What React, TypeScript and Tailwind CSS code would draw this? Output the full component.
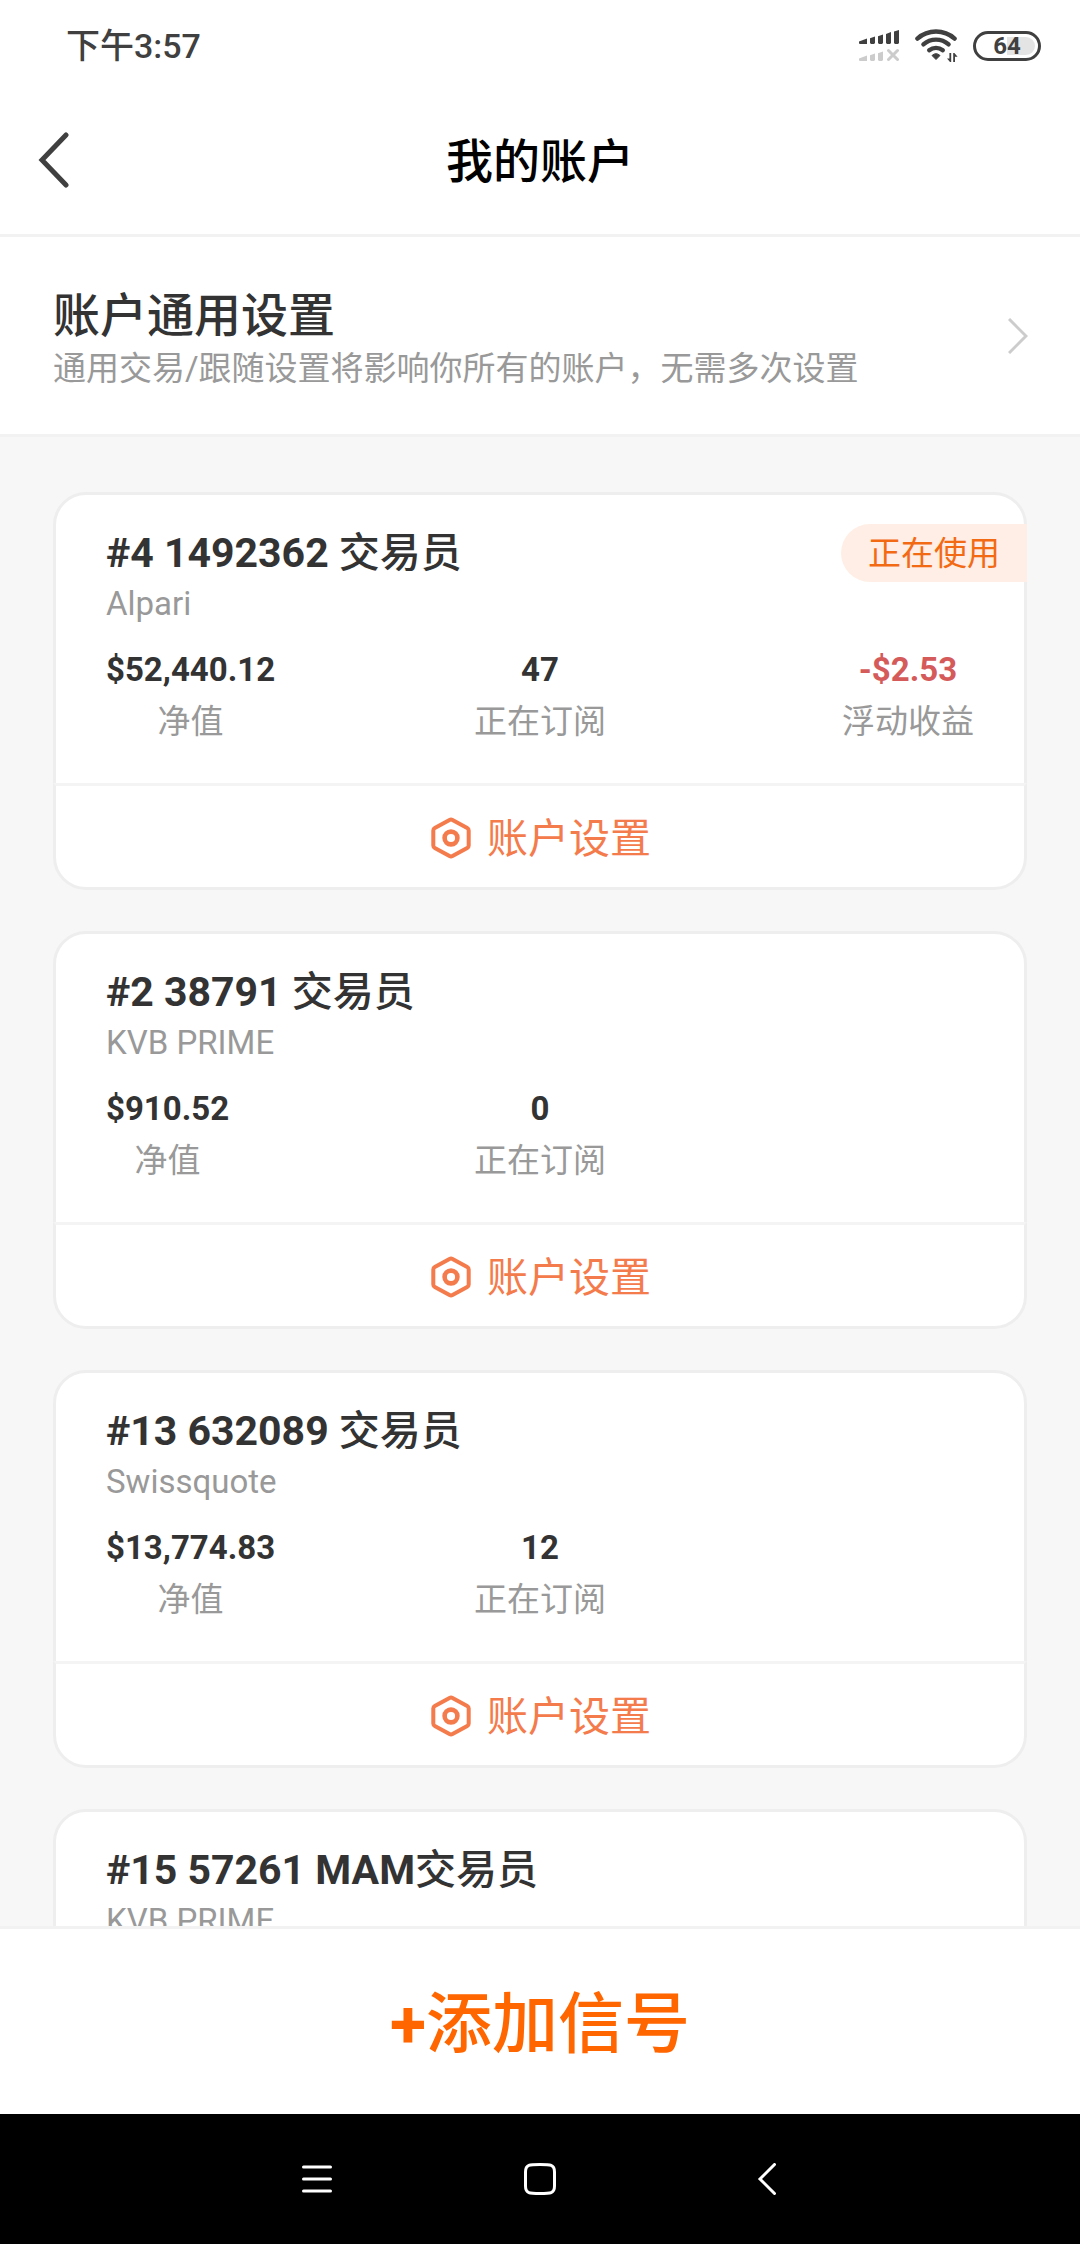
type Account = {
  id: string;
  role: string;
  broker: string;
  equity?: string;
  subscriptions?: string;
  floating?: string;
  active?: boolean;
};

const accounts: Account[] = [
  { id: "#4 1492362 ", role: "交易员", broker: "Alpari", equity: "$52,440.12", subscriptions: "47", floating: "-$2.53", active: true },
  { id: "#2 38791 ", role: "交易员", broker: "KVB PRIME", equity: "$910.52", subscriptions: "0" },
  { id: "#13 632089 ", role: "交易员", broker: "Swissquote", equity: "$13,774.83", subscriptions: "12" },
  { id: "#15 57261 MAM", role: "交易员", broker: "KVB PRIME" },
];

function SignalIcon() {
  return (
    <svg className="h-8 w-10" viewBox="0 0 40 32" aria-hidden="true">
      <g fill="#404040">
        <path d="M0 11.5 8 8.5V14H1a1 1 0 0 1-1-1z" />
        <path d="M11 8.3 16 6.5V13l-1 1h-3l-1-1z" />
        <path d="M19 6.2 24 4.4V13l-1 1h-3l-1-1z" />
        <path d="M27 4 32 2V13l-1 1h-3l-1-1z" />
        <path d="M35 1.5 40 0V13l-1 1h-3l-1-1z" />
      </g>
      <g fill="#cccccc">
        <path d="M0 28.5 8 25.5V31H1a1 1 0 0 1-1-1z" />
        <path d="M11 25.3 16 23.5V30l-1 1h-3l-1-1z" />
        <path d="M19 23.2 24 21.4V30l-1 1h-3l-1-1z" />
      </g>
      <path d="M29.5 20.5 38.5 29.5M38.5 20.5 29.5 29.5" stroke="#cccccc" strokeWidth="3" strokeLinecap="round" />
    </svg>
  );
}

function WifiIcon() {
  return (
    <svg className="h-[34px] w-11" viewBox="0 0 44 34" fill="none" aria-hidden="true">
      <g stroke="#404040" strokeWidth="4.4" strokeLinecap="round">
        <path d="M2.4 9.6A28 28 0 0 1 39.6 9.6" />
        <path d="M8.4 15.4A19 19 0 0 1 33.6 15.4" />
        <path d="M14.2 21.2A11 11 0 0 1 27.8 21.2" />
      </g>
      <path d="M17 26.5Q21 22.8 25 26.5L21 30.5Z" fill="#404040" stroke="#404040" strokeLinejoin="round" />
      <path d="M36.2 24V33H35L32 29.4H34.4V24ZM38.2 33V24H39.4L42.6 27.8H40V33Z" fill="#404040" />
    </svg>
  );
}

function HexIcon() {
  return (
    <svg className="h-[42px] w-10" viewBox="0 0 40 42" fill="none" stroke="#f47b4c" aria-hidden="true">
      <path d="M18.5 2.9a3 3 0 0 1 3 0L36.2 11a3 3 0 0 1 1.5 2.6V28.4a3 3 0 0 1-1.5 2.6L21.5 39.1a3 3 0 0 1-3 0L3.8 31a3 3 0 0 1-1.5-2.6V13.6A3 3 0 0 1 3.8 11Z" strokeWidth="4" />
      <circle cx="20" cy="21" r="6.4" strokeWidth="4.6" />
    </svg>
  );
}

function Stat({ value, label, align, tone }: { value: string; label: string; align: string; tone: string }) {
  return (
    <div className={`flex flex-col items-center ${align}`}>
      <dd className={`text-[33px] leading-[44px] font-bold ${tone}`}>{value}</dd>
      <dt className="mt-2 text-[33px] leading-[44px] text-[#999999]">{label}</dt>
    </div>
  );
}

function AccountCard({ account }: { account: Account }) {
  return (
    <article className="shrink-0 rounded-[33px] border-[3px] border-[#eeeeee] bg-white">
      <div className="pt-[29px] pb-[39px] pl-[50px]">
        <div className="flex items-center justify-between">
          <h2 className="text-[41px] leading-[58px] font-bold text-[#333333]">
            {account.id}
            <span className="font-medium">{account.role}</span>
          </h2>
          {account.active && (
            <span className="-mr-[3px] h-[58px] rounded-l-full bg-[#ffeee5] px-[27px] text-[33px] leading-[60px] text-[#f36a14]">
              正在使用
            </span>
          )}
        </div>
        <p className="text-[33px] leading-[44px] text-[#999999]">{account.broker}</p>
        {account.equity && account.subscriptions && (
          <dl className="mt-[22px] mr-[50px] grid grid-cols-3">
            <Stat value={account.equity} label="净值" align="justify-self-start" tone="text-[#333333]" />
            <Stat value={account.subscriptions} label="正在订阅" align="justify-self-center" tone="text-[#333333]" />
            {account.floating && (
              <Stat value={account.floating} label="浮动收益" align="justify-self-end" tone="text-[#d55a5a]" />
            )}
          </dl>
        )}
      </div>
      {account.equity && (
        <button
          type="button"
          className="-mx-[3px] flex h-[104px] w-[calc(100%+6px)] items-center justify-center gap-4 border-x-[3px] border-t-[3px] border-x-transparent border-t-[#f4f4f4] pt-0.5 pl-0.5 text-[41px] text-[#f47b4c]"
        >
          <HexIcon />
          <span className="pt-1">账户设置</span>
        </button>
      )}
    </article>
  );
}

export default function App() {
  return (
    <div className="flex h-screen flex-col bg-white font-[Roboto,'Noto_Sans_CJK_SC',sans-serif]">
      <div className="flex h-[92px] shrink-0 items-center justify-between pr-[39px] pl-[66px] text-[#404040]">
        <time className="text-[34px] font-medium">下午3:57</time>
        <div className="flex items-center">
          <SignalIcon />
          <span className="ml-4">
            <WifiIcon />
          </span>
          <span className="ml-[14px] flex h-[30px] w-[68px] items-center justify-center rounded-full border-[3px] border-[#404040] bg-white p-[3px]">
            <span className="flex h-full w-full items-center justify-center rounded-full bg-[linear-gradient(90deg,transparent_50%,#e4e4e4_50%)] text-[24px] leading-none font-bold">
              64
            </span>
          </span>
        </div>
      </div>

      <header className="grid h-[145px] shrink-0 grid-cols-[1fr_auto_1fr] items-center border-b-[3px] border-[#f2f2f2] pb-0.5">
        <button type="button" aria-label="返回" className="pb-1 pl-[38px]">
          <svg className="h-14 w-8" viewBox="0 0 32 56" fill="none" stroke="#404040" strokeWidth="5" strokeLinecap="round" aria-hidden="true">
            <path d="M28 3 4 28 28 53" />
          </svg>
        </button>
        <h1 className="text-[47px] leading-[64px] font-medium text-black">我的账户</h1>
      </header>

      <button
        type="button"
        className="flex h-[200px] shrink-0 items-center justify-between border-b-[3px] border-[#f2f2f2] pr-[52px] pl-[53px] text-left"
      >
        <span className="flex flex-col pt-1.5">
          <span className="text-[47px] leading-[60px] font-medium text-[#333333]">账户通用设置</span>
          <span className="text-[33px] leading-[46px] text-[#999999]">通用交易/跟随设置将影响你所有的账户，无需多次设置</span>
        </span>
        <svg className="h-9 w-5" viewBox="0 0 20 36" fill="none" stroke="#cccccc" strokeWidth="3" aria-hidden="true">
          <path d="M1 1 18 18 1 35" />
        </svg>
      </button>

      <main className="flex min-h-0 flex-1 flex-col gap-[41px] overflow-y-auto bg-[#f7f7f7] px-[53px] pt-[55px] [scrollbar-width:none]">
        {accounts.map((account) => (
          <AccountCard key={account.id} account={account} />
        ))}
      </main>

      <button
        type="button"
        className="h-[188px] shrink-0 border-t-[3px] border-[#f2f2f2] bg-white pt-1.5 text-[66px] font-bold text-[#ff6600]"
      >
        +<span className="font-medium">添加信号</span>
      </button>

      <nav className="flex h-[130px] shrink-0 justify-center bg-black">
        <button type="button" aria-label="菜单" className="flex w-[223px] items-center justify-center">
          <svg className="h-8 w-[30px]" viewBox="0 0 30 32" stroke="#ffffff" strokeWidth="3" strokeLinecap="round" aria-hidden="true">
            <path d="M1.5 4H28.5M1.5 16H28.5M1.5 28H28.5" />
          </svg>
        </button>
        <button type="button" aria-label="主屏幕" className="flex w-[223px] items-center justify-center">
          <svg className="size-8" viewBox="0 0 32 32" fill="none" stroke="#ffffff" strokeWidth="3" aria-hidden="true">
            <path d="M16 1.5C26.500 1.500 30.500 1.500 30.500 9V23C30.500 30.500 26.500 30.500 16 30.500S1.500 30.500 1.500 23V9C1.500 1.500 5.500 1.500 16 1.500Z" />
          </svg>
        </button>
        <button type="button" aria-label="后退" className="flex w-[223px] items-center justify-center">
          <svg className="h-8 w-7" viewBox="0 0 28 32" fill="none" stroke="#ffffff" strokeWidth="3" strokeLinecap="round" aria-hidden="true">
            <path d="M25.500 1.500 11 16 25.500 30.500" />
          </svg>
        </button>
      </nav>
    </div>
  );
}
